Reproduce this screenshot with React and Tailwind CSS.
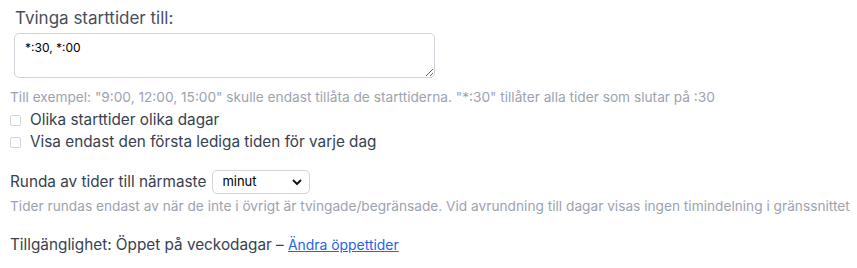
import React from "react";

export default function App() {
  return (
    <div className="w-[857px] h-[268px] bg-white pl-[10px] pt-[8px] text-[#374151]" style={{ fontFamily: 'Inter, "Liberation Sans", Arial, sans-serif' }}>
      <div className="pl-[4px]">
        <div className="text-[17px] leading-[20px] text-[#454f5e] pl-[1px]">Tvinga starttider till:</div>
        <textarea
          className="mt-[5px] block w-[421px] h-[45px] border border-[#d1d5db] rounded-[5px] px-[10px] py-[5px] text-[12px] text-black bg-white outline-none"
          defaultValue="*:30, *:00"
        />
      </div>
      <div className="mt-[10px] text-[13.7px] leading-[18px] text-[#9ca3af]">
        Till exempel: "9:00, 12:00, 15:00" skulle endast tillåta de starttiderna. "*:30" tillåter alla tider som slutar på :30
      </div>
      <label className="mt-[3px] flex items-center gap-[9px] text-[15.3px] leading-[22px] text-[#374151]">
        <span className="w-[11px] h-[11px] border border-[#d1d5db] rounded-[2px] bg-white"></span>
        Olika starttider olika dagar
      </label>
      <label className="flex items-center gap-[9px] text-[15.3px] leading-[22px] text-[#374151]">
        <span className="w-[11px] h-[11px] border border-[#d1d5db] rounded-[2px] bg-white"></span>
        Visa endast den första lediga tiden för varje dag
      </label>
      <div className="mt-[17px] flex items-center gap-[6px] text-[15.3px] text-[#374151]">
        <span>Runda av tider till närmaste</span>
        <div className="relative w-[98px] h-[24px] border border-[#d1d5db] rounded-[5px] flex items-center pl-[9px] text-[13px] text-black">
          minut
          <svg className="absolute right-[7px] top-[8px]" width="10" height="7" viewBox="0 0 10 7">
            <path d="M1.5 1.5 L5 5 L8.5 1.5" fill="none" stroke="#111" strokeWidth="1.8" strokeLinecap="round" strokeLinejoin="round" />
          </svg>
        </div>
      </div>
      <div className="mt-[3px] text-[13.7px] leading-[18px] text-[#9ca3af]">
        Tider rundas endast av när de inte i övrigt är tvingade/begränsade. Vid avrundning till dagar visas ingen timindelning i gränssnittet
      </div>
      <div className="mt-[20px] text-[15.3px] leading-[20px] text-[#374151]">
        Tillgänglighet: Öppet på veckodagar – <a href="#" className="text-[#2563eb] underline text-[13.9px]">Ändra öppettider</a>
      </div>
    </div>
  );
}
